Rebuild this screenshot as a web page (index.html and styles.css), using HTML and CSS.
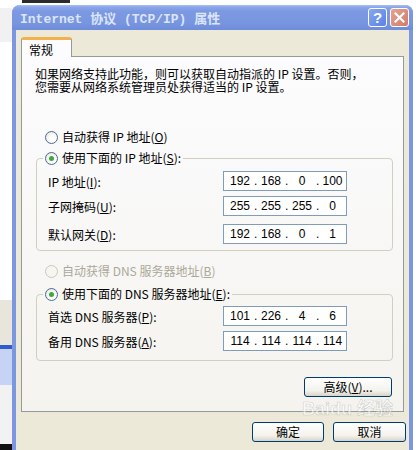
FILE: index.html
```html
<!DOCTYPE html>
<html lang="zh-CN">
<head>
    <meta charset="UTF-8">
    <title>Internet 协议 (TCP/IP) 属性</title>
    <link rel="stylesheet" href="styles.css">
</head>
<body>
    <!-- bits of the window behind the dialog -->
    <div class="behind"></div>
    <div class="behind-top"><span class="sel"></span></div>

    <div class="window">
        <div class="titlebar">
            <span class="title">Internet 协议 (TCP/IP) 属性</span>
            <div class="title-btns">
                <span class="tbtn help">?</span>
                <span class="tbtn close">
                    <svg width="11" height="11" viewBox="0 0 11 11"><path d="M1.5 1.5 L9.5 9.5 M9.5 1.5 L1.5 9.5" stroke="#fff" stroke-width="2.2" stroke-linecap="square"/></svg>
                </span>
            </div>
        </div>

        <div class="client">
            <div class="tabs"><div class="tab">常规</div></div>
            <div class="panel">
                <p class="intro">如果网络支持此功能，则可以获取自动指派的 IP 设置。否则，</p>
                <p class="intro">您需要从网络系统管理员处获得适当的 IP 设置。</p>

                <label class="radio first"><span class="dot"></span>自动获得 IP 地址(<u>O</u>)</label>

                <fieldset class="group">
                    <legend><label class="radio"><span class="dot on"></span>使用下面的 IP 地址(<u>S</u>):</label></legend>
                    <div class="rows ip-rows">
                        <div class="row">
                            <span>IP 地址(<u>I</u>):</span>
                            <div class="ipbox"><span>192</span><i>.</i><span>168</span><i>.</i><span>0</span><i>.</i><span>100</span></div>
                        </div>
                        <div class="row">
                            <span>子网掩码(<u>U</u>):</span>
                            <div class="ipbox"><span>255</span><i>.</i><span>255</span><i>.</i><span>255</span><i>.</i><span>0</span></div>
                        </div>
                        <div class="row third">
                            <span>默认网关(<u>D</u>):</span>
                            <div class="ipbox"><span>192</span><i>.</i><span>168</span><i>.</i><span>0</span><i>.</i><span>1</span></div>
                        </div>
                    </div>
                </fieldset>

                <label class="radio disabled"><span class="dot"></span>自动获得 DNS 服务器地址(<u>B</u>)</label>

                <fieldset class="group dns">
                    <legend><label class="radio"><span class="dot on"></span>使用下面的 DNS 服务器地址(<u>E</u>):</label></legend>
                    <div class="rows dns-rows">
                        <div class="row">
                            <span>首选 DNS 服务器(<u>P</u>):</span>
                            <div class="ipbox"><span>101</span><i>.</i><span>226</span><i>.</i><span>4</span><i>.</i><span>6</span></div>
                        </div>
                        <div class="row">
                            <span>备用 DNS 服务器(<u>A</u>):</span>
                            <div class="ipbox"><span>114</span><i>.</i><span>114</span><i>.</i><span>114</span><i>.</i><span>114</span></div>
                        </div>
                    </div>
                </fieldset>

                <div class="adv"><button class="btn wide">高级(<u>V</u>)...</button></div>
            </div>

            <div class="actions">
                <button class="btn">确定</button>
                <button class="btn">取消</button>
            </div>
        </div>
    </div>

    <div class="watermark">Bai<span>du</span> 经验</div>
</body>
</html>
```

FILE: styles.css
```css
body {
    margin: 0;
    width: 416px;
    height: 450px;
    overflow: hidden;
    position: relative;
    background: #ffffff;
    font-family: "Noto Sans CJK SC", "DejaVu Sans", sans-serif;
    font-size: 12px;
    color: #000000;
}

.behind {
    position: absolute;
    left: 0;
    top: 0;
    width: 12px;
    height: 450px;
    background: linear-gradient(#ffffff 0, #ffffff 8px, #f1f1f1 8px, #f1f1f1 42px, #ffffff 42px,
        #ffffff 300px, #e8e6dc 300px, #e8e6dc 345px, #2f5bd0 345px, #2f5bd0 349px,
        #c6d3f5 349px, #c6d3f5 385px, #f2f2f2 385px, #f2f2f2 444px, #111111 444px);
}

.behind-top {
    position: absolute;
    left: 12px;
    top: 0;
    width: 404px;
    height: 5px;
}

.behind-top .sel {
    display: block;
    margin-left: 10px;
    width: 48px;
    height: 3px;
    background: #2b2b2b;
}

.window {
    position: absolute;
    left: 12px;
    top: 5px;
    width: 401px;
    height: 460px;
    border-radius: 8px 8px 0 0;
    overflow: hidden;
    background: #7b97e0;
}

.titlebar {
    height: 25px;
    display: flex;
    align-items: center;
    justify-content: space-between;
    padding: 0 4px 0 8px;
    background: linear-gradient(#a9c0f3 0, #8ba7ea 2px, #7c99e2 6px, #7895df 18px, #6f8cd9 25px);
}

.title {
    font-family: "Liberation Mono", "Noto Sans CJK SC", monospace;
    font-weight: bold;
    font-size: 13px;
    color: #dbe5f9;
    white-space: nowrap;
}

.title-btns {
    display: flex;
    gap: 3px;
}

.tbtn {
    width: 17px;
    height: 17px;
    border: 1px solid #ffffff;
    border-radius: 3px;
    display: flex;
    align-items: center;
    justify-content: center;
    color: #ffffff;
    font-family: "Liberation Sans", sans-serif;
    font-weight: bold;
    font-size: 15px;
}

.help {
    background: linear-gradient(135deg, #86a6f0, #5b83e6);
}

.close {
    background: linear-gradient(135deg, #e7a192, #d27c6a);
}

.client {
    height: 435px;
    margin: 0 4px;
    padding: 7px 5px 0 5px;
    background: #ece9d8;
}

.tabs {
    display: flex;
}

.tab {
    width: 51px;
    height: 20px;
    box-sizing: border-box;
    padding: 3px 0 0 7px;
    margin-bottom: -1px;
    border: 1px solid #919b9c;
    border-bottom: none;
    border-top: 3px solid #f4b04b;
    border-radius: 3px 3px 0 0;
    background: #fcfcfe;
    position: relative;
    line-height: 14px;
}

.panel {
    width: 383px;
    height: 356px;
    box-sizing: border-box;
    padding: 10px 10px 0 13px;
    border: 1px solid #919b9c;
    background: linear-gradient(#fcfcfe, #f4f3ee);
}

.intro {
    margin: 0;
    height: 13px;
    line-height: 13px;
    white-space: nowrap;
}

.radio {
    display: flex;
    align-items: center;
    height: 16px;
    line-height: 16px;
    white-space: nowrap;
}

.radio .dot {
    width: 11px;
    height: 11px;
    margin-right: 4px;
    border: 1px solid #4b6a94;
    border-radius: 50%;
    background: radial-gradient(circle at 60% 65%, #ffffff 30%, #e4e2d8 95%);
    position: relative;
}

.radio .dot.on::after {
    content: "";
    position: absolute;
    left: 3px;
    top: 3px;
    width: 5px;
    height: 5px;
    border-radius: 50%;
    background: #3ea93a;
}

.radio.first {
    margin: 36px 0 0 10px;
}

.radio.disabled {
    margin: 12px 0 0 10px;
    color: #aca899;
}

.radio.disabled .dot {
    border-color: #cac8bb;
    background: #f6f5f0;
}

.group {
    margin: 5px 0 0 1px;
    padding: 0;
    border: 1px solid #d0d0bf;
    border-radius: 4px;
    min-width: 0;
}

.group legend {
    margin-left: 6px;
    padding: 0 2px;
}

.group.dns {
    margin-top: 7px;
}

.rows {
    padding: 5px 45px 6px 11px;
}

.dns-rows {
    padding: 4px 45px 9px 11px;
}

.row {
    display: flex;
    align-items: center;
    justify-content: space-between;
    height: 20px;
    margin-top: 5px;
}

.row:first-child {
    margin-top: 0;
}

.row.third {
    margin-top: 8px;
}

.ipbox {
    width: 124px;
    height: 20px;
    box-sizing: border-box;
    border: 1px solid #7f9db9;
    background: #ffffff;
    padding-left: 2px;
    display: grid;
    grid-template-columns: 28px 3px 28px 3px 28px 3px 1fr;
    align-items: center;
    font-family: "Liberation Sans", sans-serif;
    font-size: 12px;
}

.ipbox span {
    text-align: center;
}

.ipbox i {
    font-style: normal;
    text-align: center;
}

.adv {
    margin: 16px 1px 0 0;
    display: flex;
    justify-content: flex-end;
}

.btn {
    width: 72px;
    height: 20px;
    padding: 0;
    border: 1px solid #003c74;
    border-radius: 3px;
    background: linear-gradient(#ffffff, #f3f2ec 70%, #d8d3c6);
    font-family: "Noto Sans CJK SC", sans-serif;
    font-size: 12px;
    line-height: 16px;
    color: #000000;
}

.btn.wide {
    width: 88px;
}

.actions {
    display: flex;
    justify-content: flex-end;
    gap: 9px;
    margin: 10px -2px 0 0;
}

.actions .btn:last-child {
    width: 73px;
}

.watermark {
    position: absolute;
    left: 302px;
    top: 398px;
    font-family: "Liberation Sans", "Noto Sans CJK SC", sans-serif;
    font-weight: bold;
    font-size: 18px;
    line-height: 22px;
    color: rgba(255, 255, 255, 0.55);
    -webkit-text-stroke: 0.6px rgba(110, 110, 110, 0.3);
    pointer-events: none;
}
```
